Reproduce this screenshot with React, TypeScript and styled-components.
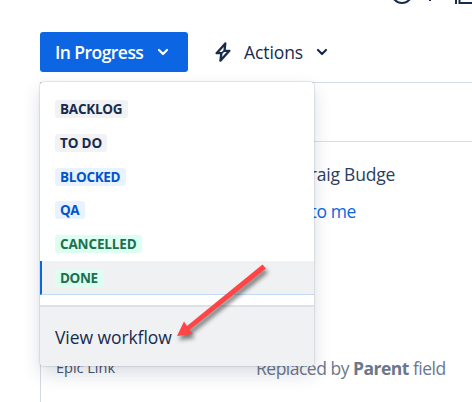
import React from "react";
import styled, { createGlobalStyle } from "styled-components";

const GlobalStyle = createGlobalStyle`
  * { box-sizing: border-box; }
  body {
    margin: 0;
    background: #fff;
    color: #172b4d;
    font-family: "Open Sans", "Noto Sans", sans-serif;
    overflow: hidden;
  }
`;

const Page = styled.main`
  position: relative;
  width: 472px;
  height: 402px;
  overflow: hidden;
`;

const TopIcons = styled.header`
  height: 32px;
  padding-left: 388px;
  svg { display: block; }
`;

const Toolbar = styled.div`
  display: flex;
  height: 50px;
  padding-left: 40px;
  align-items: flex-start;
`;

const Button = styled.button<{ $primary?: boolean }>`
  display: flex;
  align-items: center;
  flex: none;
  width: ${(p) => (p.$primary ? 148 : 159)}px;
  height: 40px;
  border: 0;
  border-radius: 3px;
  padding: 0 0 0 ${(p) => (p.$primary ? 15 : 27)}px;
  background: ${(p) => (p.$primary ? "#0c66e4" : "transparent")};
  color: ${(p) => (p.$primary ? "#fff" : "#172b4d")};
  font-family: inherit;
`;

const Bolt = styled.svg`
  flex: none;
  margin-right: 13px;
`;

const Fit = styled.span<{ $size: number; $spacing?: number; $weight?: number; $color?: string }>`
  font-size: ${(p) => p.$size}px;
  letter-spacing: ${(p) => p.$spacing ?? 0}px;
  font-weight: ${(p) => p.$weight ?? 400};
  color: ${(p) => p.$color ?? "inherit"};
  line-height: 24px;
  white-space: nowrap;
`;

const Chevron = styled.svg`
  flex: none;
  margin-left: auto;
  margin-right: 19px;
`;

const Details = styled.section`
  height: 320px;
  margin-left: 40px;
  border-left: 1px solid #d5d9e3;
  border-top: 1px solid #d5d9e8;
`;

const DetailsHeader = styled.div`
  height: 59px;
  border-bottom: 1px solid #dcdfe0;
`;

const Field = styled.div<{ $gap: number; $indent: number }>`
  display: flex;
  height: 24px;
  margin-top: ${(p) => p.$gap}px;
  padding-left: ${(p) => p.$indent}px;
`;

const FieldLabel = styled.div`
  width: 200px;
  flex: none;
`;

const Menu = styled.div`
  position: absolute;
  left: 40px;
  top: 82px;
  width: 274px;
  height: 284px;
  display: flex;
  flex-direction: column;
  padding-top: 10px;
  border-radius: 4px;
  background: #fff;
  overflow: hidden;
`;

const MenuShadow = styled.div`
  position: absolute;
  left: 40px;
  top: 82px;
  width: 274px;
  height: 284px;
  border-radius: 4px;
  box-shadow: 0 8px 18px rgba(30, 45, 75, 0.16), 0 0 1.5px rgba(30, 45, 75, 0.5);
`;

const MenuItem = styled.div<{ $selected?: boolean }>`
  display: flex;
  align-items: center;
  flex: none;
  height: ${(p) => (p.$selected ? 34 : 33.8)}px;
  padding-top: ${(p) => (p.$selected ? 1 : 0.3)}px;
  padding-left: ${(p) => (p.$selected ? 13 : 15)}px;
  background: ${(p) => (p.$selected ? "#f0f1f3" : "transparent")};
  border-left: ${(p) => (p.$selected ? "2px solid #0c66e4" : "0")};
  border-bottom: ${(p) => (p.$selected ? "1px solid #c3daf5" : "0")};
`;

const tones = {
  gray: ["#f1f2f4", "#172b4d"],
  blue: ["#e9f2ff", "#0055cc"],
  green: ["#dcfff1", "#216e4e"],
};

const Lozenge = styled.span<{ $tone: keyof typeof tones; $width: number; $spacing: number }>`
  width: ${(p) => p.$width}px;
  height: 18px;
  padding-left: 5px;
  border-radius: 3px;
  background: ${(p) => tones[p.$tone][0]};
  color: ${(p) => tones[p.$tone][1]};
  font-size: 13.5px;
  font-weight: 700;
  line-height: 18px;
  letter-spacing: ${(p) => p.$spacing}px;
  white-space: nowrap;
`;

const MenuFooter = styled.div`
  display: flex;
  align-items: center;
  height: 61px;
  margin-top: auto;
  padding: 1px 0 0 15px;
  border-top: 2px solid #dfe1e6;
  background: #f0f1f3;
`;

const Arrow = styled.svg`
  position: absolute;
  left: 168px;
  top: 256px;
  filter: drop-shadow(2px 4px 2px rgba(0, 0, 0, 0.5));
`;

const statuses: { name: string; tone: keyof typeof tones; width: number; spacing: number }[] = [
  { name: "BACKLOG", tone: "gray", width: 73, spacing: -0.25 },
  { name: "TO DO", tone: "gray", width: 52, spacing: -0.15 },
  { name: "BLOCKED", tone: "blue", width: 71, spacing: -0.35 },
  { name: "QA", tone: "blue", width: 30, spacing: -0.6 },
  { name: "CANCELLED", tone: "green", width: 87, spacing: -0.15 },
  { name: "DONE", tone: "green", width: 49, spacing: -0.4 },
];

const Down = () => (
  <Chevron width="12" height="8" viewBox="0 0 12 8" fill="none">
    <path d="M2 2l4 4 4-4" stroke="currentColor" strokeWidth="2.2" strokeLinecap="round" strokeLinejoin="round" />
  </Chevron>
);

export default function App() {
  return (
    <>
      <GlobalStyle />
      <Page>
        <TopIcons>
          <svg width="84" height="6" viewBox="0 0 84 6" fill="none" stroke="#172b4d" strokeWidth="2">
            <circle cx="14" cy="-7" r="10" />
            <path d="M42 -4V1M68 -8V4M71.5 -8V3H84" />
          </svg>
        </TopIcons>
        <Toolbar>
          <Button $primary>
            <Fit $size={17.5} $spacing={-0.55} $weight={550}>In Progress</Fit>
            <Down />
          </Button>
          <Button>
            <Bolt width="16" height="20" viewBox="0 0 16 20" fill="none">
              <path d="M10.3 1.4L1.6 11.2h4.8l-1 7.4L14.4 8.8H9.5z" stroke="#172b4d" strokeWidth="2.3" strokeLinejoin="round" />
              <path d="M6.4 11.2L9.5 8.8" stroke="#172b4d" strokeWidth="1.6" />
            </Bolt>
            <Fit $size={17.5} $spacing={-0.1}>Actions</Fit>
            <Down />
          </Button>
        </Toolbar>
        <Details>
          <DetailsHeader />
          <Field $gap={20} $indent={258}>
            <Fit $size={17.5} $spacing={-0.22} $color="#2c3e5d">Craig Budge</Fit>
          </Field>
          <Field $gap={13} $indent={215}>
            <Fit $size={17.5} $spacing={-0.35} $color="#0c66e4">Assign to me</Fit>
          </Field>
          <Field $gap={133} $indent={15}>
            <FieldLabel><Fit $size={14.5} $color="#44546f">Epic Link</Fit></FieldLabel>
            <Fit $size={17.5} $spacing={-0.5} $color="#6b778c">
              Replaced by <b>Parent</b> field
            </Fit>
          </Field>
        </Details>
        <MenuShadow />
        <Menu>
          {statuses.map((s) => (
            <MenuItem key={s.name} $selected={s.name === "DONE"}>
              <Lozenge $tone={s.tone} $width={s.width} $spacing={s.spacing}>{s.name}</Lozenge>
            </MenuItem>
          ))}
          <MenuFooter>
            <Fit $size={17.5} $spacing={-0.07}>View workflow</Fit>
          </MenuFooter>
        </Menu>
        <Arrow width="108" height="96" viewBox="0 0 108 96">
          <path d="M94.5 8.5L98 12.5L21.5 74L25 78L9 80L16 65.5L19 70Z" fill="#ff4545" />
        </Arrow>
      </Page>
    </>
  );
}
